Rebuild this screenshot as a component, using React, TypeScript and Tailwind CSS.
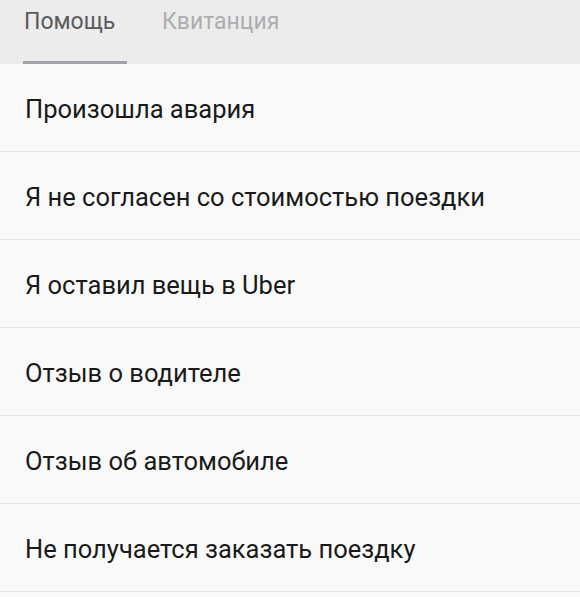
const items = [
  "Произошла авария",
  "Я не согласен со стоимостью поездки",
  "Я оставил вещь в Uber",
  "Отзыв о водителе",
  "Отзыв об автомобиле",
  "Не получается заказать поездку",
];

export default function App() {
  return (
    <div className="w-[580px] h-[597px] overflow-hidden bg-[#f9f9f9] font-['Roboto',sans-serif]">
      <div className="h-[64px] bg-[#ececec] flex items-stretch pl-[23px]">
        <div className="relative w-[104px] pl-[1px] pt-[6px]">
          <span className="text-[23px] leading-[32px] text-[#5a5a5e]">Помощь</span>
          <div className="absolute left-0 right-0 bottom-0 h-[3px] bg-[#a2a2a8]" />
        </div>
        <div className="pl-[35px] pt-[6px]">
          <span className="text-[23px] leading-[32px] text-[#acacb0]">Квитанция</span>
        </div>
      </div>
      <ul>
        {items.map((t) => (
          <li
            key={t}
            className="h-[88px] flex items-center pl-[25px] pt-[3px] border-b border-[#e4e4e4] text-[25.5px] text-[#1a1a1a]"
          >
            {t}
          </li>
        ))}
      </ul>
    </div>
  );
}
